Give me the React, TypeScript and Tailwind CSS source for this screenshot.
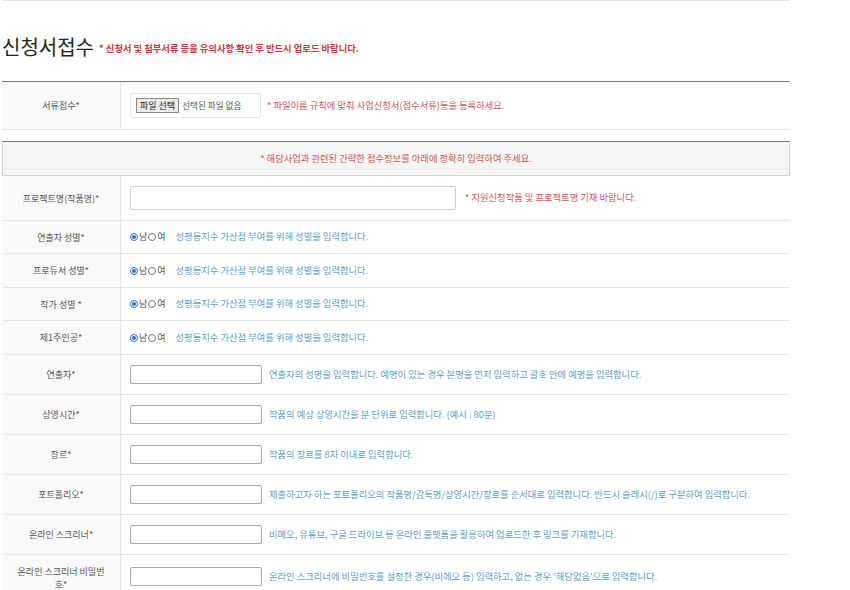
import type { ReactNode } from 'react';

const font = { fontFamily: '"Noto Sans CJK KR", "Noto Sans", sans-serif' };

function Row({ label, height, labelPad = '', children }: { label: ReactNode; height: string; labelPad?: string; children: ReactNode }) {
  return (
    <div className={`flex border-b border-[#e6e6e6] ${height}`}>
      <div className={`flex w-[119px] shrink-0 items-center justify-center break-all border-r border-[#e6e6e6] bg-[#f9f9f9] px-[14px] text-center text-[9px] leading-[13px] text-[#555] ${labelPad}`}>
        {label}
      </div>
      <div className="flex flex-1 items-center pl-[9px]">{children}</div>
    </div>
  );
}

function Gender() {
  return (
    <>
      <span className="flex items-center text-[9px] text-[#555]">
        <span className="mr-[1px] flex h-[8px] w-[8px] items-center justify-center rounded-full border border-[#2a6fd6] bg-white">
          <span className="h-[4px] w-[4px] rounded-full bg-[#2a6fd6]" />
        </span>
        남
        <span className="mx-[1px] h-[8px] w-[8px] rounded-full border border-[#777] bg-white" />
        여
      </span>
      <span className="ml-[10px] text-[9.3px] text-[#5e9fc9]">성평등지수 가산점 부여를 위해 성별을 입력합니다.</span>
    </>
  );
}

function TextRow({ label, desc, height = 'h-[40px]', labelPad }: { label: ReactNode; desc: string; height?: string; labelPad?: string }) {
  return (
    <Row label={label} height={height} labelPad={labelPad}>
      <div className="h-[19px] w-[132px] shrink-0 rounded-[2px] border border-[#a9a9a9] bg-white" />
      <span className="ml-[7px] whitespace-nowrap text-[9.3px] text-[#5e9fc9]">{desc}</span>
    </Row>
  );
}

export default function App() {
  return (
    <div className="min-h-screen bg-white" style={font}>
      <div className="ml-[2px] w-[788px] border-t border-[#e6e6e6]">
        <div className="flex items-center pt-[33px]">
          <h1 className="text-[20px] leading-[26px] text-[#222]">신청서접수</h1>
          <span className="ml-[5px] mt-[4px] text-[9.3px] font-bold text-[#d03a3a]">* 신청서 및 첨부서류 등을 유의사항 확인 후 반드시 업로드 바랍니다.</span>
        </div>

        <div className="mt-[21px] border-t border-[#777]">
          <Row label="서류접수*" height="h-[48px]">
            <div className="flex h-[25px] w-[131px] items-center rounded-[2px] border border-[#e3e3e3] bg-white pl-[5px]">
              <span className="border border-[#8a8a8a] bg-[#ececec] px-[3px] text-[9px] leading-[13px] text-[#222]">파일 선택</span>
              <span className="ml-[3px] text-[8.6px] text-[#555]">선택된 파일 없음</span>
            </div>
            <span className="ml-[6px] text-[9.3px] text-[#d4585a]">* 파일이름 규칙에 맞춰 사업신청서(접수서류)등을 등록하세요.</span>
          </Row>
        </div>

        <div className="mt-[11px] border-t border-[#777]">
          <div className="flex h-[34px] items-center justify-center border-x border-b border-[#d6d6d6] bg-[#f5f5f5] text-[9.3px] text-[#d4585a]">
            * 해당사업과 관련된 간략한 접수정보를 아래에 정확히 입력하여 주세요.
          </div>
          <Row label="프로젝트명(작품명)*" height="h-[45px]">
            <div className="h-[24px] w-[326px] shrink-0 rounded-[2px] border border-[#cfcfcf] bg-white" />
            <span className="ml-[9px] text-[9.3px] text-[#d4585a]">* 지원신청작품 및 프로젝트명 기재 바랍니다.</span>
          </Row>
          <Row label="연출자 성별*" height="h-[33px]"><Gender /></Row>
          <Row label="프로듀서 성별*" height="h-[34px]"><Gender /></Row>
          <Row label="작가 성별 *" height="h-[33px]"><Gender /></Row>
          <Row label="제1주인공*" height="h-[34px]"><Gender /></Row>
          <TextRow label="연출자*" desc="연출자의 성명을 입력합니다. 예명이 있는 경우 본명을 먼저 입력하고 괄호 안에 예명을 입력합니다." />
          <TextRow label="상영시간*" desc="작품의 예상 상영시간을 분 단위로 입력합니다. (예시 : 80분)" />
          <TextRow label="장르*" desc="작품의 장르를 8자 이내로 입력합니다." />
          <TextRow label="포트폴리오*" desc="제출하고자 하는 포트폴리오의 작품명/감독명/상영시간/장르를 순서대로 입력합니다. 반드시 슬래시(/)로 구분하여 입력합니다." />
          <TextRow label="온라인 스크리너*" desc="비메오, 유튜브, 구글 드라이브 등 온라인 플랫폼을 활용하여 업로드한 후 링크를 기재합니다." />
          <TextRow
            label="온라인 스크리너 비밀번호*"
            height="h-[44px]"
            labelPad="pt-[3px]"
            desc="온라인 스크리너에 비밀번호를 설정한 경우(비메오 등) 입력하고, 없는 경우 '해당없음'으로 입력합니다."
          />
        </div>
      </div>
    </div>
  );
}
